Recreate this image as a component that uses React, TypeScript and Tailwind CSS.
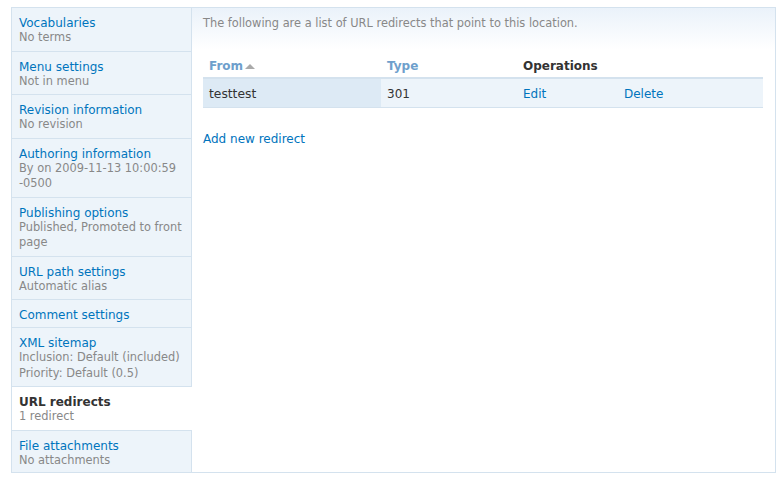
import React from "react";

const items: { title: string; desc: string[]; active?: boolean }[] = [
  { title: "Vocabularies", desc: ["No terms"] },
  { title: "Menu settings", desc: ["Not in menu"] },
  { title: "Revision information", desc: ["No revision"] },
  { title: "Authoring information", desc: ["By on 2009-11-13 10:00:59", "-0500"] },
  { title: "Publishing options", desc: ["Published, Promoted to front", "page"] },
  { title: "URL path settings", desc: ["Automatic alias"] },
  { title: "Comment settings", desc: [] },
  { title: "XML sitemap", desc: ["Inclusion: Default (included)", "Priority: Default (0.5)"] },
  { title: "URL redirects", desc: ["1 redirect"], active: true },
  { title: "File attachments", desc: ["No attachments"] },
];

export default function App() {
  return (
    <div
      className="w-[783px] h-[482px] bg-white pt-[7px] pl-[11px]"
      style={{ fontFamily: '"DejaVu Sans", sans-serif' }}
    >
      <div className="flex w-[765px] h-[466px] border border-[#d4e2ee] overflow-hidden">
        <ul className="w-[180px] shrink-0 bg-[#edf4fa] border-r border-[#d4e2ee] flex flex-col">
          {items.map((it, i) => (
            <li
              key={i}
              className={
                "px-[7px] pt-[8px] pb-[5px] border-b border-[#d4e2ee] " +
                (it.active ? "bg-white -mr-px" : "")
              }
            >
              <div
                className={
                  "text-[12px] leading-[14px] " +
                  (it.active ? "font-bold text-[#333]" : "text-[#0074bd]")
                }
              >
                {it.title}
              </div>
              {it.desc.map((d, j) => (
                <div key={j} className="text-[11.4px] leading-[15.5px] text-[#888]">
                  {d}
                </div>
              ))}
            </li>
          ))}
        </ul>
        <div className="flex-1 bg-gradient-to-b from-[#eaf2fa] to-white to-[42px] pl-[11px] pr-[12px] pt-[7px]">
          <p className="text-[11.4px] leading-[16px] text-[#888]">
            The following are a list of URL redirects that point to this location.
          </p>
          <table className="w-[560px] mt-[24px] border-collapse text-[12px]">
            <thead>
              <tr className="border-b-2 border-[#d4e2ee]">
                <th className="w-[178px] text-left font-bold text-[#6e9fcc] px-[6px] h-[23px] align-middle">
                  <span className="inline-flex items-center">
                    From
                    <svg width="12" height="8" viewBox="0 0 12 8" className="ml-[1px]">
                      <path d="M1 7 L6 2 L11 7 Z" fill="#aaa" />
                    </svg>
                  </span>
                </th>
                <th className="w-[136px] text-left font-bold text-[#6e9fcc] px-[6px]">Type</th>
                <th colSpan={2} className="text-left font-bold text-[#333] px-[6px]">
                  Operations
                </th>
              </tr>
            </thead>
            <tbody>
              <tr className="border-b border-[#d4e2ee] bg-[#edf4fa] h-[29px]">
                <td className="px-[6px] pt-[2px] bg-[#ddeaf5] text-[#333] text-[12.3px]">testtest</td>
                <td className="px-[6px] pt-[2px] text-[#333]">301</td>
                <td className="w-[101px] pt-[2px] px-[6px] text-[#0074bd]">Edit</td>
                <td className="px-[6px] pt-[2px] text-[#0074bd]">Delete</td>
              </tr>
            </tbody>
          </table>
          <div className="mt-[22px] text-[12px] text-[#0074bd]">Add new redirect</div>
        </div>
      </div>
    </div>
  );
}
